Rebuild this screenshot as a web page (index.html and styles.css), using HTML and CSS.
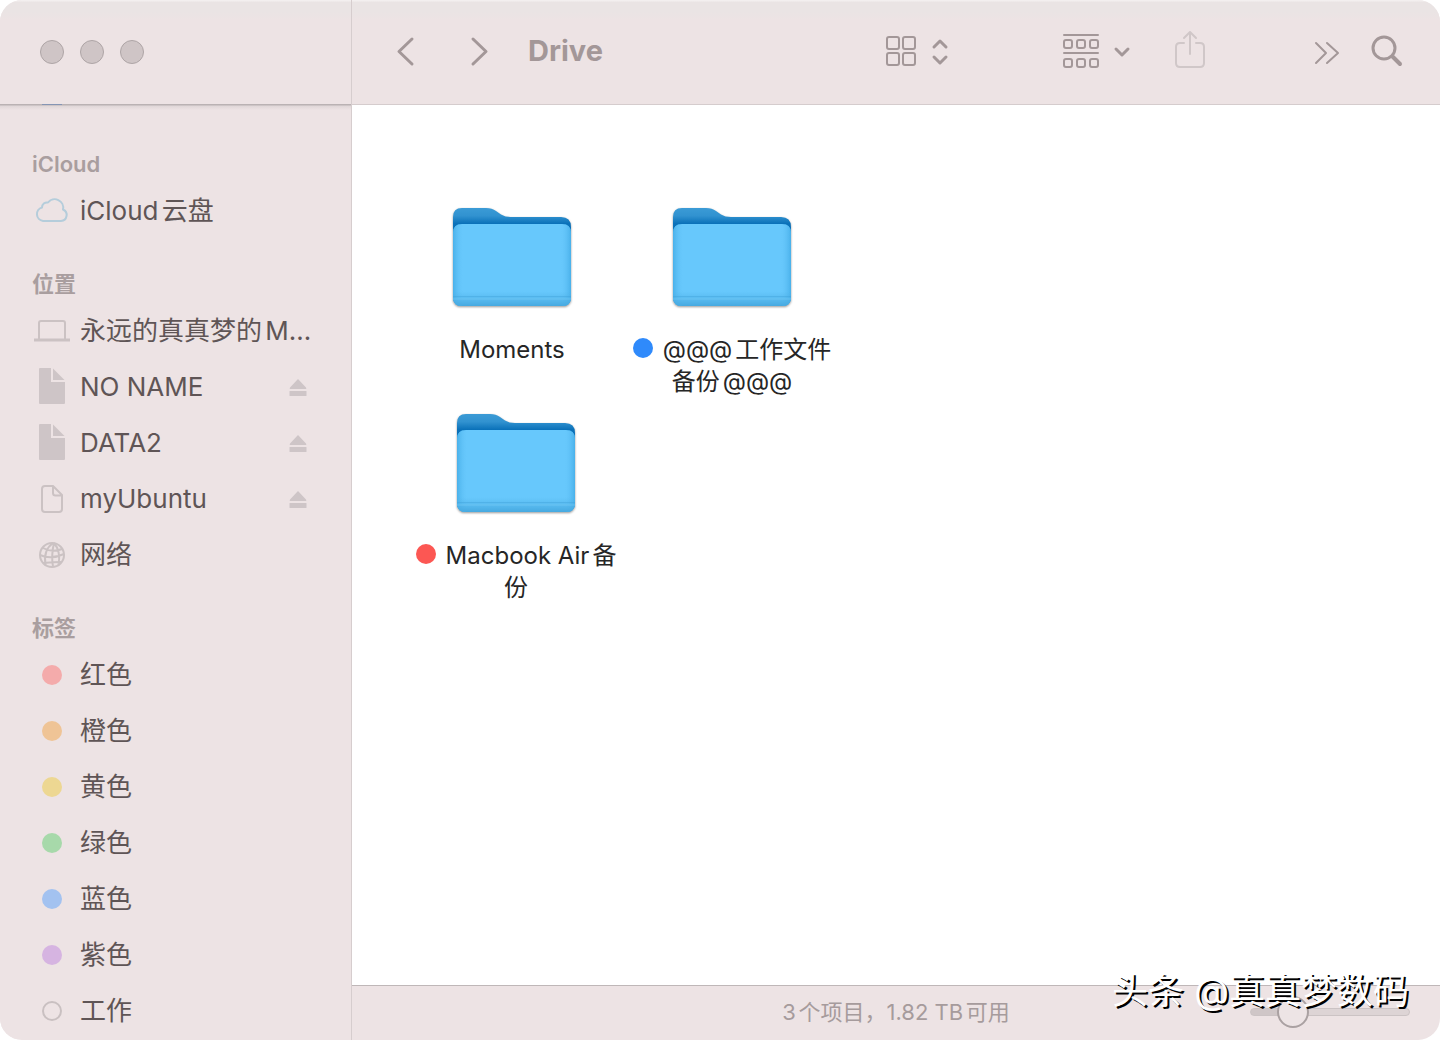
FILE: index.html
```html
<!DOCTYPE html>
<html lang="zh-CN">
  <head>
    <meta charset="UTF-8" />
    <meta name="viewport" content="width=device-width, initial-scale=1.0" />
    <title>Drive</title>
    <link rel="stylesheet" href="styles.css">
  </head>
  <body>
    <svg width="0" height="0" class="defs" aria-hidden="true">
      <defs>
        <linearGradient id="back" x1="0" y1="0" x2="0" y2="1">
          <stop offset="0" stop-color="#3b9bd6" />
          <stop offset="0.08" stop-color="#3192d0" />
          <stop offset="0.16" stop-color="#0a71b9" />
          <stop offset="1" stop-color="#0a71b9" />
        </linearGradient>
        <linearGradient id="side" x1="0" y1="0" x2="1" y2="0">
          <stop offset="0" stop-color="#3fa9e4" stop-opacity="0.75" />
          <stop offset="0.09" stop-color="#67c6fa" stop-opacity="0" />
          <stop offset="0.91" stop-color="#67c6fa" stop-opacity="0" />
          <stop offset="1" stop-color="#3fa9e4" stop-opacity="0.75" />
        </linearGradient>
        <linearGradient id="bottom" x1="0" y1="0" x2="0" y2="1">
          <stop offset="0.82" stop-color="#4fb2e8" stop-opacity="0" />
          <stop offset="1" stop-color="#46a9e0" />
        </linearGradient>
        <symbol id="folder" viewBox="0 0 120 104">
          <path d="M1 90V10Q1 1 10 1H34Q40 1 44 4L49 7.500Q53 10 59 10H109Q119 10 119 20V90Q119 99 110 99H10Q1 99 1 90Z" fill="url(#back)" />
          <path d="M1 26Q1 17 10 17H110Q119 17 119 26V90Q119 99 110 99H10Q1 99 1 90Z" fill="#67c8fc" />
          <path d="M1 26Q1 17 10 17H110Q119 17 119 26V90Q119 99 110 99H10Q1 99 1 90Z" fill="url(#side)" />
          <path d="M1 26Q1 17 10 17H110Q119 17 119 26V90Q119 99 110 99H10Q1 99 1 90Z" fill="url(#bottom)" />
          <path d="M1 89.500H119" stroke="#3f9fd6" stroke-opacity="0.4" />
          <path d="M1 92H119" stroke="#7accf5" stroke-opacity="0.6" />
        </symbol>
        <symbol id="eject" viewBox="0 0 18 18">
          <path d="M9 1L17 9.500Q18 11 16 11H2Q0 11 1 9.500Z" />
          <rect x="0.500" y="13" width="17" height="5" rx="0.500" />
        </symbol>
        <symbol id="doc-fill" viewBox="0 0 28 38">
          <path d="M2 0H13V14H27V35Q27 36 26 36H2Q1 36 1 35V1Q1 0 2 0Z" />
          <path d="M15 0.500L26.500 12H15Z" />
        </symbol>
      </defs>
    </svg>

    <div class="window">
      <aside class="sidebar">
        <div class="titlebar">
          <button class="light" aria-label="关闭"></button>
          <button class="light" aria-label="最小化"></button>
          <button class="light" aria-label="缩放"></button>
        </div>
        <nav class="places">
          <div class="scrolled"></div>
          <h2>iCloud</h2>
          <ul>
            <li>
              <a href="#">
                <span class="slot">
                  <svg class="cloud" width="34" height="28" viewBox="0 0 34 28"><path d="M8 24H26A6 6 0 0 0 28 12.500A8.500 8.500 0 0 0 13 5.500A5 5 0 0 0 7 10.500A6.900 6.900 0 0 0 8 24Z" /></svg>
                </span>
                <span class="name">iCloud云盘</span>
              </a>
            </li>
          </ul>
          <h2>位置</h2>
          <ul>
            <li>
              <a href="#">
                <span class="slot">
                  <svg class="line" width="36" height="24" viewBox="0 0 36 24"><path d="M5 20V4Q5 2 7 2H29Q31 2 31 4V20" /><path d="M0 21H36" stroke-width="3" /></svg>
                </span>
                <span class="name">永远的真真梦的M…</span>
              </a>
            </li>
            <li>
              <a href="#">
                <span class="slot"><svg class="solid" width="28" height="38"><use href="#doc-fill" /></svg></span>
                <span class="name">NO NAME</span>
              </a>
              <button class="eject" aria-label="推出"><svg width="18" height="18"><use href="#eject" /></svg></button>
            </li>
            <li>
              <a href="#">
                <span class="slot"><svg class="solid" width="28" height="38"><use href="#doc-fill" /></svg></span>
                <span class="name">DATA2</span>
              </a>
              <button class="eject" aria-label="推出"><svg width="18" height="18"><use href="#eject" /></svg></button>
            </li>
            <li>
              <a href="#">
                <span class="slot">
                  <svg class="line" width="22" height="28" viewBox="0 0 22 28"><path d="M12 1H4Q1 1 1 4V24Q1 27 4 27H18Q21 27 21 24V10L12 1V8Q12 10.500 14.500 10.500H21" /></svg>
                </span>
                <span class="name">myUbuntu</span>
              </a>
              <button class="eject" aria-label="推出"><svg width="18" height="18"><use href="#eject" /></svg></button>
            </li>
            <li>
              <a href="#">
                <span class="slot">
                  <svg class="line" width="26" height="26" viewBox="0 0 26 26"><circle cx="13" cy="13" r="12" /><path d="M15 1Q12 13 14 25M14 1Q4 8 6.500 23M15 1Q22 9 19.500 23M4 6Q13 11 23 7M1 13Q12 18 25 12M4 21Q14 20 23 20" /></svg>
                </span>
                <span class="name">网络</span>
              </a>
            </li>
          </ul>
          <h2>标签</h2>
          <ul>
            <li><a href="#"><span class="slot"><i class="tag red"></i></span><span class="name">红色</span></a></li>
            <li><a href="#"><span class="slot"><i class="tag orange"></i></span><span class="name">橙色</span></a></li>
            <li><a href="#"><span class="slot"><i class="tag yellow"></i></span><span class="name">黄色</span></a></li>
            <li><a href="#"><span class="slot"><i class="tag green"></i></span><span class="name">绿色</span></a></li>
            <li><a href="#"><span class="slot"><i class="tag blue"></i></span><span class="name">蓝色</span></a></li>
            <li><a href="#"><span class="slot"><i class="tag purple"></i></span><span class="name">紫色</span></a></li>
            <li><a href="#"><span class="slot"><i class="tag none"></i></span><span class="name">工作</span></a></li>
          </ul>
        </nav>
      </aside>

      <main class="main">
        <header class="toolbar">
          <div class="history">
            <button aria-label="后退">
              <svg width="20" height="32" viewBox="0 0 20 32"><path d="M16 4L3 16.500L16 29" stroke-width="3" /></svg>
            </button>
            <button aria-label="前进">
              <svg width="20" height="32" viewBox="0 0 20 32"><path d="M4 4L17 16.500L4 29" stroke-width="3" /></svg>
            </button>
          </div>
          <h1>Drive</h1>
          <button class="view" aria-label="显示方式">
            <svg width="64" height="40" viewBox="0 0 64 40">
              <rect x="1" y="6" width="12" height="12" rx="2" /><rect x="17" y="6" width="12" height="12" rx="2" />
              <rect x="1" y="22" width="12" height="12" rx="2" /><rect x="17" y="22" width="12" height="12" rx="2" />
              <path d="M48 16L54 10L60 16M48 26L54 32L60 26" stroke-width="3" />
            </svg>
          </button>
          <button class="group" aria-label="分组">
            <svg width="68" height="40" viewBox="0 0 68 40">
              <path d="M1 4H35M1 22H35" />
              <rect x="1" y="9" width="8" height="8" rx="2" /><rect x="14" y="9" width="8" height="8" rx="2" /><rect x="27" y="9" width="8" height="8" rx="2" />
              <rect x="1" y="28" width="8" height="8" rx="2" /><rect x="14" y="28" width="8" height="8" rx="2" /><rect x="27" y="28" width="8" height="8" rx="2" />
              <path d="M53 18L59 24L65 18" stroke-width="3" />
            </svg>
          </button>
          <button class="share" aria-label="共享" disabled>
            <svg width="30" height="44" viewBox="0 0 30 44"><path d="M9 14H5Q1 14 1 18V34Q1 38 5 38H25Q29 38 29 34V18Q29 14 25 14H21M15 25V3M9 9L15 3L21 9" /></svg>
          </button>
          <button class="more" aria-label="更多">
            <svg width="28" height="28" viewBox="0 0 28 28"><path d="M3 6L13 16L3 26M14 6L25 16L14 26" /></svg>
          </button>
          <button class="search" aria-label="搜索">
            <svg width="32" height="34" viewBox="0 0 32 34"><circle cx="13" cy="14" r="11" stroke-width="3" /><path d="M22 23L29 30" stroke-width="4" /></svg>
          </button>
        </header>

        <section class="files">
          <div class="row">
            <figure>
              <svg width="120" height="104"><use href="#folder" /></svg>
              <figcaption>Moments</figcaption>
            </figure>
            <figure>
              <svg width="120" height="104"><use href="#folder" /></svg>
              <figcaption><i class="dot blue-dot"></i>@@@工作文件<br>备份@@@</figcaption>
            </figure>
          </div>
          <div class="row second">
            <figure>
              <svg width="120" height="104"><use href="#folder" /></svg>
              <figcaption><i class="dot red-dot"></i>Macbook Air备<br>份</figcaption>
            </figure>
          </div>
        </section>

        <footer class="status">
          <p>3个项目，1.82 TB可用</p>
          <input type="range" min="0" max="100" value="21" aria-label="图标大小">
        </footer>
      </main>

      <div class="watermark">头条 @真真梦数码</div>
    </div>
  </body>
</html>
```

FILE: styles.css
```css
* {
  box-sizing: border-box;
}
body {
  margin: 0;
  background: #fff;
  font-family: Inter, "Noto Sans CJK SC", sans-serif;
  color: #5f5556;
  text-autospace: normal;
}
h1,
h2,
p,
ul,
figure {
  margin: 0;
  padding: 0;
}
ul {
  list-style: none;
}
button {
  display: flex;
  align-items: center;
  justify-content: center;
  padding: 0;
  border: 0;
  background: none;
}
.defs {
  position: absolute;
}

.window {
  position: relative;
  display: flex;
  min-height: 100vh;
  border-radius: 22px;
  overflow: hidden;
  background: #ede3e4;
}

/* sidebar */
.sidebar {
  flex: 0 0 352px;
  min-width: 0;
  border-right: 1px solid #d6cdce;
}
.titlebar {
  display: flex;
  align-items: center;
  gap: 16px;
  height: 104px;
  padding-left: 40px;
  background: linear-gradient(#f3efef 1px, #eae4e4 2px, #eae4e4 12px, #ede3e4 20px);
}
.light {
  width: 24px;
  height: 24px;
  border: 1px solid #aea5a6;
  border-radius: 50%;
  background: #cfc5c6;
}
.places {
  background: linear-gradient(#bab2b3 1px, #e0d7d8 2px, #ede3e4 6px);
}
.scrolled {
  width: 20px;
  height: 1px;
  margin-left: 42px;
  margin-bottom: 14px;
  background: #8595b4;
}
.places h2 {
  height: 64px;
  padding: 26px 32px 0;
  font-size: 22px;
  line-height: 38px;
  font-weight: 600;
  color: #a99e9f;
}
.places li {
  display: flex;
  align-items: center;
  height: 56px;
  padding: 0 44px 0 32px;
}
.places a {
  display: flex;
  flex: 1;
  align-items: center;
  gap: 8px;
  min-width: 0;
  color: inherit;
  text-decoration: none;
}
.slot {
  display: flex;
  flex: 0 0 40px;
  align-items: center;
  justify-content: center;
}
.name {
  font-size: 26px;
  line-height: 36px;
  font-weight: 400;
  white-space: nowrap;
}
.cloud,
.line {
  fill: none;
  stroke: #cbc2c3;
  stroke-width: 2;
  stroke-linejoin: round;
}
.cloud {
  stroke: #b5cddb;
}
.solid,
.eject {
  fill: #cec5c7;
}
.tag {
  width: 20px;
  height: 20px;
  border-radius: 50%;
}
.red { background: #f4abab; }
.orange { background: #efc496; }
.yellow { background: #edd792; }
.green { background: #a7d9aa; }
.blue { background: #a3c2f0; }
.purple { background: #d6b4e1; }
.none { border: 2px solid #c9c0c1; }

/* toolbar */
.main {
  display: flex;
  flex: 1;
  flex-direction: column;
  min-width: 0;
}
.toolbar {
  display: flex;
  align-items: center;
  height: 105px;
  padding: 0 37px 2px 44px;
  border-bottom: 1px solid #d5cccd;
  background: linear-gradient(#f3efef 1px, #eae4e4 2px, #eae4e4 12px, #ede3e4 20px);
}
.toolbar svg {
  fill: none;
  stroke: #a39798;
  stroke-width: 2;
  stroke-linecap: round;
  stroke-linejoin: round;
}
.history {
  display: flex;
  gap: 53px;
  margin-right: 39px;
}
.toolbar h1 {
  flex: 1;
  font-size: 29px;
  line-height: 40px;
  font-weight: 700;
  color: #a39798;
}
.group {
  margin-left: 113px;
}
.share {
  margin-left: 44px;
}
.toolbar .share svg {
  stroke: #d0c7c8;
}
.more {
  margin-left: 108px;
}
.search {
  margin-left: 30px;
}

/* icon view */
.files {
  flex: 1;
  padding-top: 102px;
  background: #fff;
}
.row {
  display: flex;
  min-height: 206px;
  padding-left: 50px;
}
.second {
  padding-left: 54px;
}
figure {
  display: flex;
  flex-direction: column;
  align-items: center;
  gap: 23px;
  width: 220px;
}
.row svg {
  filter: drop-shadow(0 1px 1px rgba(0, 0, 0, 0.4));
}
figcaption {
  font-size: 24px;
  line-height: 32px;
  text-align: center;
  white-space: nowrap;
  color: #262626;
}
.dot {
  display: inline-block;
  width: 20px;
  height: 20px;
  margin-right: 10px;
  border-radius: 50%;
  vertical-align: baseline;
}
.blue-dot { background: #2f8afb; }
.red-dot { background: #fc5753; }

/* status bar */
.status {
  display: grid;
  grid-template-columns: 1fr auto 1fr;
  align-items: center;
  height: 55px;
  padding: 0 30px 2px;
  border-top: 1px solid #bfb7b8;
}
.status p {
  grid-column: 2;
  font-size: 22px;
  line-height: 32px;
  color: #a69b9c;
}
.status input {
  justify-self: end;
  width: 160px;
  height: 32px;
  margin: 0;
  appearance: none;
  background: none;
}
.status input::-webkit-slider-runnable-track {
  height: 8px;
  border: 1px solid #cbc3c4;
  border-radius: 4px;
  background: linear-gradient(to right, #cfc6c7 27%, #ddd4d5 27%);
}
.status input::-webkit-slider-thumb {
  width: 32px;
  height: 32px;
  margin-top: -13px;
  appearance: none;
  border: 2px solid #aaa1a2;
  border-radius: 50%;
  background: #ede4e5;
}

.watermark {
  position: absolute;
  right: 31px;
  bottom: 25px;
  font-size: 36px;
  line-height: 48px;
  font-weight: 400;
  color: #fff;
  text-autospace: no-autospace;
  text-shadow: 2px 2px 0 #000;
}
```
